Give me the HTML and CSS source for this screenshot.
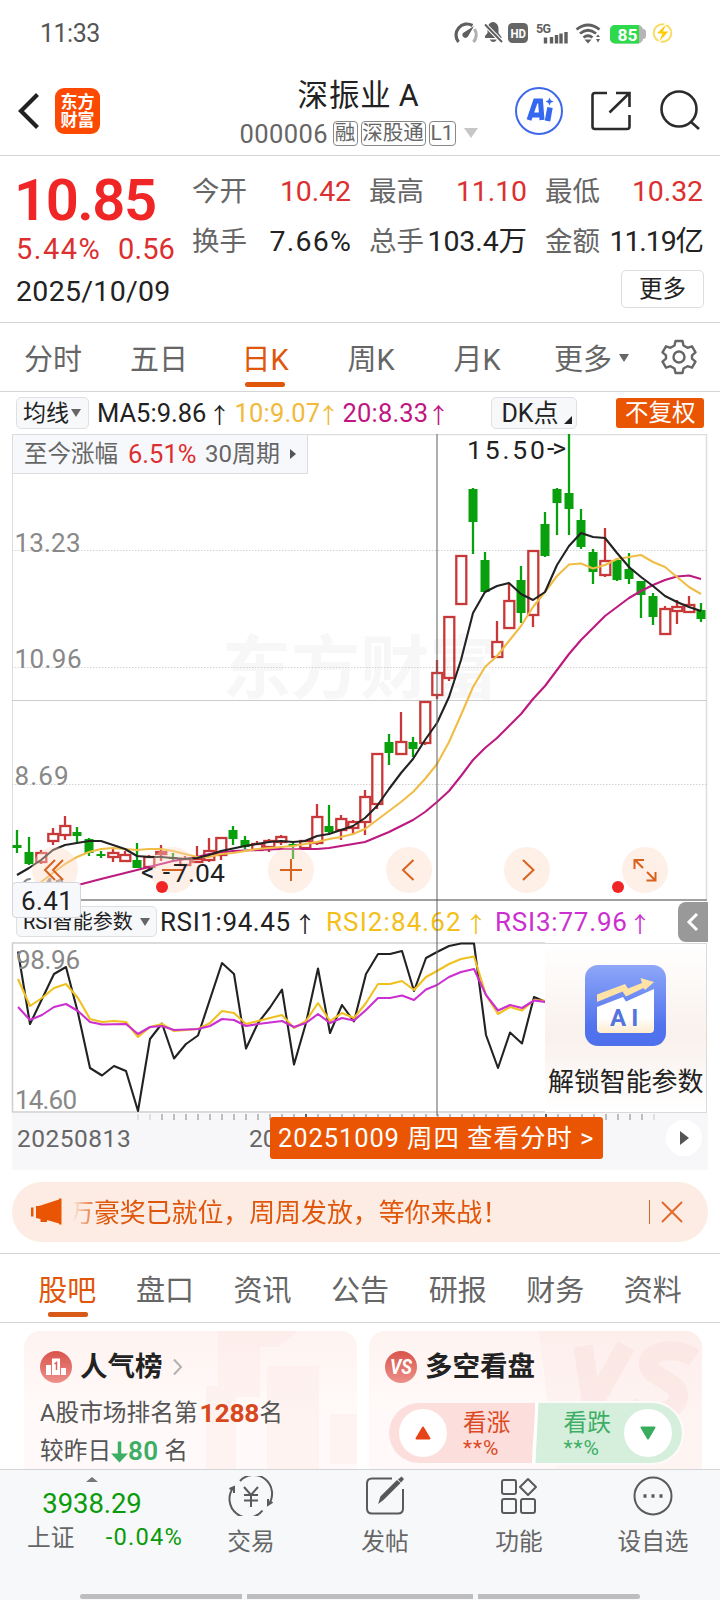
FILE: index.html
```html
<!DOCTYPE html>
<html lang="zh-CN">
<head>
<meta charset="utf-8">
<title>深振业A 000006</title>
<link rel="stylesheet" href="styles.css">
</head>
<body>
<div class="status">
  <span class="clock">11:33</span>
  <svg class="status-icons" width="232" height="30" viewBox="446 18 232 30">
    <g fill="none" stroke="#5f5f5f" stroke-width="3.2">
      <path d="M458.5 42a11 11 0 0 1 14-16.5"/>
      <path d="M474.500 29a11 11 0 0 1-1 13" stroke="#b0b0b0"/>
    </g>
    <path d="M474 26l-6 10.500a3 3 0 0 1-5-3.500z" fill="#5f5f5f"/>
    <path d="M485 38v-2l2.500-3v-5.500q1-5 5.500-5.500c3.500.500 5.500 3 5.500 7v4l3 4v1zM489.500 39.500h7.500q-3.500 5-7.500 0z" fill="#5f5f5f"/>
    <path d="M483.500 23L502 42" stroke="#fff" stroke-width="4"/><path d="M485 24.500L502 42" stroke="#5f5f5f" stroke-width="2"/>
    <rect x="508" y="23" width="20" height="20" rx="4.500" fill="#666"/>
    <text x="510.500" y="37.500" class="ic-b" font-size="12.500" fill="#fff" textLength="15.500" lengthAdjust="spacingAndGlyphs">HD</text>
    <text x="536" y="33" class="ic-b" font-size="12.500" fill="#5f5f5f" textLength="15">5G</text>
    <path d="M545.500 37.500v6M551.500 37v6.500M556.500 35v8.500M561 33.500v10M566 32v11.500" stroke="#5f5f5f" stroke-width="3.400"/>
    <g fill="none" stroke="#5f5f5f" stroke-width="2.800"><path d="M576.500 29.500q11.500-9 23 0M580 33.500q8-6.500 16 0M583.500 37.500q4.500-3.500 9 0"/></g>
    <path d="M584.500 39.500h7l-3.500 4zM596 37l2-2.500 2 2.500zM596 39l2 3.500 2-3.500z" fill="#5f5f5f"/>
    <rect x="638" y="29" width="8" height="10" rx="3" fill="#b5b5b5"/><rect x="610" y="25" width="33" height="18.500" rx="5" fill="#b5b5b5"/><path d="M615 25h24v18.500h-24a5 5 0 0 1-5-5v-8.500a5 5 0 0 1 5-5z" fill="#2fd94c"/>
    <text x="617.500" y="40.500" class="ic-b" font-size="17" fill="#fff" textLength="20" lengthAdjust="spacingAndGlyphs">85</text>
    <circle cx="662.500" cy="33" r="8.800" fill="none" stroke="#f7dc62" stroke-width="2"/><path d="M668 21l-14 13.500h7L657 45l14-14h-7z" fill="#fff"/><path d="M666 24.500l-9 9h5.500l-3 7.500 9-9.500h-5.500z" fill="#fc0"/>
  </svg>
</div>

<header class="header">
  <div class="head-left">
    <svg width="24" height="38" viewBox="0 0 24 38"><path d="M20.500 2.500L4 19l16.500 16.500" fill="none" stroke="#222" stroke-width="4.200"/></svg>
    <div class="logo"><span>东方</span><span>财富</span></div>
  </div>
  <div class="head-mid">
    <div class="name">深振业<span>A</span></div>
    <div class="code"><span class="num">000006</span><i class="b1">融</i><i class="b2">深股通</i><i class="b3">L1</i><b class="caret"></b></div>
  </div>
  <svg class="head-right" width="190" height="52" viewBox="512 85 190 52">
    <circle cx="539" cy="111" r="23" fill="none" stroke="#3d68ea" stroke-width="2"/>
    <path d="M529 120l6.500-19h5l1.500 19M532 115h9" fill="none" stroke="#3568f0" stroke-width="5"/>
    <path d="M550 107.500l-2.500 13.500" stroke="#3568f0" stroke-width="5.500"/><path d="M549.500 97.500l1.200 2.800 2.800 1.200-2.800 1.200-1.200 2.800-1.200-2.800-2.800-1.200 2.800-1.200z" fill="#3568f0"/>
    <g fill="none" stroke="#2b2b2b" stroke-width="2.600"><path d="M607 93h-12q-2.500 0-2.500 2.500v31q0 2.500 2.500 2.500h32q2.500 0 2.500-2.500V115M616 93h13.500v14M629.500 93L609.500 112.500"/><circle cx="679" cy="109" r="17.500"/><path d="M690.500 121.500l8.500 7.500"/></g>
  </svg>
</header>

<section class="quote">
  <div class="quote-top">
    <div class="price"><div class="last">10.85</div><div class="chg"><span class="pct">5.44%</span><span>0.56</span></div></div>
    <div class="stats">
      <div><label>今开</label><em class="up">10.42</em></div><div><label>最高</label><em class="up">11.10</em></div><div><label>最低</label><em class="up">10.32</em></div>
      <div><label>换手</label><em class="wide">7.66%</em></div><div><label>总手</label><em>103.4万</em></div><div><label>金额</label><em class="tight">11.19亿</em></div>
    </div>
  </div>
  <div class="quote-bot"><span>2025/10/09</span><button>更多</button></div>
</section>

<nav class="periods">
  <span style="width:106px">分时</span><span style="width:106px">五日</span><span class="on" style="width:106px">日K</span><span style="width:106px">周K</span><span style="width:106px">月K</span><span class="more" style="width:114px">更多<b class="caret"></b></span>
  <svg width="36" height="36" viewBox="-18 -18 36 36" fill="none" stroke="#666" stroke-width="2.400" stroke-linejoin="round"><path d="M-3.500-16h7l1 4.500 4 2.300 4.500-1.500 3.500 6-3.500 3v3.400l3.500 3-3.500 6-4.500-1.500-4 2.300-1 4.500h-7l-1-4.500-4-2.300-4.500 1.500-3.500-6 3.500-3v-3.400l-3.500-3 3.500-6 4.500 1.500 4-2.300z"/><circle r="5.500"/></svg>
</nav>

<div class="ma">
  <span class="pill avg">均线<b class="caret"></b></span>
  <span class="v5">MA5:9.86</span><u>↑</u>
  <span class="v10 gold">10:9.07</span><u class="gold">↑</u>
  <span class="v20 mag">20:8.33</span><u class="mag">↑</u>
  <span class="pill dk">DK点<b></b></span>
  <span class="adj">不复权</span>
</div>

<main class="charts">
  <div class="kline">
    <svg width="720" height="467" viewBox="0 434 720 467">
      <text x="222" y="693" class="wm" textLength="276">东方财富</text>
      <path d="M12.500 434.500H706.500V900" fill="none" stroke="#dedede" stroke-width="1.500"/><path d="M12.500 434v466" stroke="#dedede"/>
      <path d="M12 550.500h695M12 667.500h695M12 784.500h695" stroke="#d2d2d2" stroke-dasharray="1.500 1.500"/>
      <path d="M12 700.500h695" stroke="#ccc"/>
      <g class="axis"><text x="14.500" y="551.500" textLength="66">13.23</text><text x="14.500" y="667.500" textLength="67">10.96</text><text x="14.500" y="784.500" textLength="54">8.69</text><text x="20" y="897" textLength="48">6.41</text></g>
      <g id="candles"></g>
      <g fill="none" stroke-width="2.100" stroke-linejoin="round">
        <polyline stroke="#bd1a80" points="78,885 101,879 125,873 149,867 173,861 197,857 209,854 233,851 257,850 281,849 317,849 329,848 341,846 353,844 365,842 377,837 389,832 401,826 413,820 425,812 437,802 449,791 461,776 473,760 485,748 497,738 509,726 521,714 533,699 545,686 557,670 569,654 581,640 593,628 605,616 617,607 629,598 641,591 653,585 665,580 677,576.500 689,575.500 701,579"/>
        <polyline stroke="#f0bd47" points="41,882 53,873 65,864 77,857 89,852 101,849 113,848 125,849 137,850 149,849 161,849 173,851 185,854 197,857 209,857 221,854 233,853 245,851 257,849 269,848 281,847 293,846 305,844 317,842 329,839 341,837 353,834 365,829 377,820 389,811 401,802 413,792 425,779 437,764 449,742 461,715 473,687 485,667 497,656 509,641 521,626 533,607 545,592 557,576 569,564.500 581,563.500 593,568.500 605,565 617,559 629,557 641,555 653,562 665,567 677,577 689,587 701,594"/>
        <polyline stroke="#222" points="17,875 29,868 41,860 53,850 65,845 77,843 89,841 101,841 113,845 125,849 137,856 149,857 161,857 173,858 185,859 197,858 209,855 221,851 233,848.500 245,846 257,844 269,842 281,841 293,842 305,841 317,836 329,834 341,830 353,826 365,818 377,806 389,789 401,773 413,759 425,740 437,723 449,697 461,660 473,613 485,592 497,586 509,583 521,594 533,600 545,592 557,565 569,546 581,533 593,537 605,538 617,553 629,567 641,577 653,586 665,596 677,602 689,607 701,611"/>
      </g>
      <path d="M12 900h695" stroke="#a0a0a0" stroke-width="1.800"/>
    </svg>
    <div class="since"><span class="s1">至今涨幅</span><span class="s2 up">6.51%</span><span class="s3">30周期</span><b></b></div>
    <div class="tools">
      <i><svg viewBox="-23 -23 46 46"><path d="M0-10L-10 0 0 10M8-10L-2 0 8 10"/></svg></i>
      <i class="dot"><svg viewBox="-23 -23 46 46"><path d="M-11 0H11"/></svg></i>
      <i><svg viewBox="-23 -23 46 46"><path d="M-11 0H11M0-11V11"/></svg></i>
      <i><svg viewBox="-23 -23 46 46"><path d="M4.500-10L-6 0 4.500 10"/></svg></i>
      <i><svg viewBox="-23 -23 46 46"><path d="M-4-10L6.500 0-4 10"/></svg></i>
      <i class="dot"><svg viewBox="-23 -23 46 46"><path d="M-1-10h-9.500V-1M-10-10L-2-2M1.500 10.500H10.500V2M10 10L2 2"/></svg></i>
    </div>
    <svg class="marks" width="720" height="467" viewBox="0 434 720 467">
      <text x="467" y="458.500" class="mark" textLength="78">15.50</text><text x="547" y="457" class="mark" textLength="19">-&gt;</text>
      <text x="141" y="881" class="mark" textLength="29">&lt;-</text><text x="173" y="882" class="mark" textLength="52">7.04</text>
    </svg>
    <div class="low">6.41</div>
  </div>
  <div class="rsi-row">
    <span class="pill rsi">RSI智能参数<b class="caret"></b></span>
    <span class="r1">RSI1:94.45</span><u>↑</u>
    <span class="r2">RSI2:84.62</span><u class="y2">↑</u>
    <span class="r3">RSI3:77.96</span><u class="m2">↑</u>
    <span class="fold"><svg width="14" height="20" viewBox="0 0 14 20"><path d="M11 2L3 10l8 8" fill="none" stroke="#fff" stroke-width="3"/></svg></span>
  </div>
  <div class="rsi-chart">
    <svg width="534" height="171" viewBox="11 942 534 171">
      <path d="M545 943H12.500V1112H545" fill="none" stroke="#d0d0d0" stroke-width="1.600"/>
      <g fill="none" stroke-width="2.100" stroke-linejoin="round">
        <polyline stroke="#222" points="18,951.500 30,1024 42,999 54,974 66,967 78,1013 90,1068 102,1075.500 114,1066 126,1071 138,1111 150,1039 162,1023.500 174,1058.500 186,1044 198,1035.500 222,963 234,974 246,1048.500 258,1023 270,1007.500 282,989.500 294,1064.500 306,1023 318,968.500 330,1033 342,1005 354,1021.500 366,974 378,954 390,954 402,951 414,991 426,958 437,952 449,946 461,943.500 474,943.500 486,1035 498,1068 510,1032.500 522,1043.500 534,997 546,1002"/>
        <polyline stroke="#f0c020" points="18,979 30,1006 42,998 54,988 66,984 78,998 90,1019 102,1022 114,1021 126,1022 138,1037 150,1027 162,1024 174,1031 198,1029 210,1023 222,1011 234,1013 246,1024 258,1021 270,1018 282,1015 294,1028 306,1021 318,1003 330,1021 342,1013 354,1018 366,1003 378,984 390,984 402,981 414,990 426,977 437,971 449,964 461,959 474,956.500 486,995 498,1014 510,1007 522,1010.500 534,1000 546,1001"/>
        <polyline stroke="#cb2fcf" points="18,1007 30,1020 42,1015 54,1007 66,1004 78,1011 90,1022 102,1024.500 126,1024 138,1034 150,1027 162,1026 174,1030 198,1029 210,1026 222,1019 234,1020 246,1026 258,1024 282,1021 294,1027 306,1023 318,1014 330,1023 342,1018 354,1020.500 366,1010 378,998 390,998 402,995.500 414,1000 426,989.500 437,985 449,977 461,972 474,969 486,995 498,1010.500 510,1005 522,1008 534,1000.500 546,1002"/>
      </g>
      <g class="axis"><text x="16" y="969" textLength="64">98.96</text><text x="15" y="1109" textLength="62">14.60</text></g>
    </svg>
    <div class="ai">
      <svg width="81" height="81" viewBox="0 0 81 81">
        <defs><linearGradient id="g1" x2="0" y2="1"><stop stop-color="#8ea7f8"/><stop offset=".75" stop-color="#5273ee"/><stop offset="1" stop-color="#4f70ec"/></linearGradient><linearGradient id="g2" x2="0" y2="1"><stop stop-color="#fff"/><stop offset=".65" stop-color="#fff"/><stop offset="1" stop-color="#ffebcf"/></linearGradient></defs>
        <rect width="81" height="81" rx="13" fill="url(#g1)"/>
        <path d="M12 42L38 32l3 4.500 28-12.500v40q0 4-4 4H16q-4 0-4-4z" fill="url(#g2)"/>
        <path d="M12 29.500L40 19l3 4.500 14-5.500-1.500-5L69 17l-9 8-1.500-2L41 31.500l-3.500-5L12 37z" fill="#ffe3a5"/>
        <text x="25" y="61" font-size="24" class="ic-b" fill="#5574df" letter-spacing="5">AI</text>
      </svg>
      <span>解锁智能参数</span>
    </div>
  </div>
  <div class="dates">
    <svg width="696" height="8" viewBox="12 1113 696 8"><g id="ticks"></g></svg>
    <div class="date-row"><span class="d1">20250813</span><span class="d2">20</span><span class="cursor">20251009 周四 查看分时 &gt;</span><span class="next"><b></b></span></div>
  </div>
  <div class="cross"></div>
</main>

<div class="notice">
  <svg width="32" height="28" viewBox="0 0 32 28"><path d="M0 9.500h2.500v9H0zM5 8h3L28 1.500V.500h2.500v26H28v-1L16 22v2H9.500v-3L5 20z" fill="#ea5504"/></svg>
  <div class="notice-text">万豪奖已就位，周周发放，等你来战！</div>
  <s></s>
  <svg width="22" height="22" viewBox="0 0 22 22"><path d="M1 1l20 20M21 1L1 21" stroke="#e06a2c" stroke-width="2"/></svg>
</div>

<nav class="sections"><span class="on">股吧</span><span>盘口</span><span>资讯</span><span>公告</span><span>研报</span><span>财务</span><span>资料</span></nav>

<section class="cards">
  <article class="card">
    <svg class="bg" width="333" height="139" viewBox="24 1331 333 139"><g fill="#fbdcd9" opacity=".24"><path d="M218 1331h80l-20 16h-18v50h-24v73h-30v-84h12z"/><path d="M267 1366h52v104h-52zM330 1414h27v50h-27z"/></g></svg>
    <h3><svg width="32" height="32" viewBox="0 0 32 32"><circle cx="16" cy="16" r="16" fill="url(#g3)"/><defs><linearGradient id="g3" x2="0" y2="1"><stop stop-color="#d9544c"/><stop offset="1" stop-color="#ec918a"/></linearGradient></defs><path d="M6 14h5v10H6zM12 7.500h8V24h-8zM21 17h5v7h-5z" fill="#fff"/><path d="M14.500 13l2-1.500v7.500" fill="none" stroke="#dc6259" stroke-width="1.500"/></svg>人气榜<svg class="chev" width="10" height="18" viewBox="0 0 10 18"><path d="M1 1.500L8 9 1 16.500" fill="none" stroke="#b5b0b0" stroke-width="2"/></svg></h3>
    <p>A股市场排名第<strong>1288</strong>名</p>
    <p class="p2">较昨日<svg width="17" height="23" viewBox="0 0 17 23"><path d="M8.500 1.500v14" stroke="#3eae65" stroke-width="3.500"/><path d="M0 13.500h17L8.500 22.500z" fill="#3eae65"/></svg><strong class="down">80</strong>&nbsp;名</p>
  </article>
  <article class="card">
    <svg class="bg" width="333" height="139" viewBox="369 1331 333 139"><path d="M539 1331h163v139H556z" fill="#fbdcd9" opacity=".2"/><g fill="none" stroke="#f8d4d1" stroke-width="19" opacity=".28"><path d="M583 1346l9 60 34-60"/><path d="M694 1358q-14-10-34-6-18 6-8 20l22 14q12 14-6 24-20 8-38-4"/></g></svg>
    <h3><svg width="32" height="32" viewBox="0 0 32 32"><circle cx="16" cy="16" r="16" fill="url(#g3)"/><text x="5" y="23" class="ic-b" font-size="19.500" font-style="italic" fill="#fff" textLength="22" lengthAdjust="spacingAndGlyphs">VS</text></svg>多空看盘</h3>
    <div class="vote">
      <div class="bull"><i><svg width="16" height="14" viewBox="0 0 16 14"><path d="M8 1.500L14.500 12.500H1.500z" fill="#e64319" stroke="#e64319" stroke-width="2" stroke-linejoin="round"/></svg></i><span>看涨<small>**%</small></span></div>
      <div class="bear"><span>看跌<small>**%</small></span><i><svg width="16" height="14" viewBox="0 0 16 14"><path d="M8 12.500L14.500 1.500H1.500z" fill="#37ad5d" stroke="#37ad5d" stroke-width="2" stroke-linejoin="round"/></svg></i></div>
    </div>
  </article>
</section>

<footer class="footer">
  <div class="index"><b></b><strong>3938.29</strong><p><span>上证</span><em>-0.04%</em></p></div>
  <div class="tab"><svg width="46" height="40" viewBox="-23 -20 46 40"><path d="M-11-15A18.500 18.500 0 0 1 17.500 8.500M21.500 6l-4.500 3V3M11.500 14.500A18.500 18.500 0 0 1-17.500-8.500M-21.500-7l4.500-2v6M-7-9L0-1 7-9M0-1V11M-7-1H7M-7 4.500H7"/></svg>交易</div>
  <div class="tab"><svg width="46" height="40" viewBox="-23 -20 46 40"><path d="M7-17.500h-20q-5 0-5 5v25q0 5 5 5h26q5 0 5-5V-7"/><path d="M-5.500 6l1.500-5L12-15l2.500 2L-2 3.500zM14-16.500l2.500-2 1.500 1.500-2 2.500z" fill="#555" stroke-width="1.500"/></svg>发帖</div>
  <div class="tab"><svg width="46" height="40" viewBox="-23 -20 46 40"><rect x="-17" y="-16" width="14" height="14" rx="2"/><rect x="-17" y="3" width="14" height="14" rx="2"/><rect x="2" y="3" width="14" height="14" rx="2"/><path d="M9-17l8 8-8 8-8-8z" stroke-linejoin="round"/></svg>功能</div>
  <div class="tab"><svg width="46" height="40" viewBox="-23 -20 46 40"><circle r="18.500"/><path d="M-9.500 0h3M-1.500 0h3M6.500 0h3" stroke-width="3.500"/></svg>设自选</div>
  <div class="home"><i></i><i></i><i></i></div>
</footer>
<script src="script.js"></script>
</body>
</html>
```
FILE: styles.css
```css
* { box-sizing: border-box; }
body { margin: 0; width: 720px; height: 1600px; overflow: hidden; background: #fff; color: #222; font-family: Roboto, "Noto Sans CJK SC", sans-serif; display: flex; flex-direction: column; }
body > * { flex: none; }
i, em { font-style: normal; }
u { text-decoration: none; }
h3, p { margin: 0; }
svg { display: block; flex: none; }
.ic-b { font-weight: 700; }
.caret { display: inline-block; border: 5px solid transparent; border-top: 8px solid #666; border-bottom: 0; }
.up { color: #dc2f2f; }

.status { height: 68px; padding: 18px 42px 0 40px; display: flex; justify-content: space-between; }
.clock { font-size: 25px; line-height: 31px; color: #555; letter-spacing: -.5px; }

.header { height: 88px; border-bottom: 1px solid #d5d5d5; display: flex; position: relative; }
.head-left { width: 220px; padding: 20px 0 0 17px; display: flex; gap: 14px; }
.head-left > svg { margin-top: 4px; }
.logo { width: 45px; height: 46px; border-radius: 9px; background: #fc4a02; color: #fff; font-size: 17px; font-weight: 700; line-height: 18px; display: flex; flex-direction: column; align-items: center; padding-top: 5px; }
.head-mid { width: 278px; display: flex; flex-direction: column; align-items: center; padding-top: 9px; }
.name { font-size: 30.500px; line-height: 38px; height: 43px; letter-spacing: .9px; margin-left: -1px; }
.name span { margin-left: 7px; }
.code { display: flex; align-items: center; height: 26px; margin-left: -3px; color: #666; }
.code .num { font-size: 25.500px; width: 93px; letter-spacing: .4px; padding-top: 1px; margin-left: 2px; }
.code i { border: 1.5px solid #888; border-radius: 4px; height: 25px; font-size: 20.500px; line-height: 22px; text-align: center; margin-right: 3px; }
.code .b1 { width: 25px; } .code .b2 { width: 65px; } .code .b3 { width: 27px; font-size: 21px; line-height: 23px; }
.code .caret { border-width: 10px 7px 0; border-top-color: #c6c6c6; margin-left: 5px; }
.head-right { margin: 17px 0 0 14px; }

.quote { height: 167px; padding: 10px 16px 0; border-bottom: 1px solid #d5d5d5; }
.quote-top { display: flex; height: 104px; }
.price { width: 176px; color: #f02525; }
.last { font-size: 58px; font-weight: 600; line-height: 69px; height: 67px; letter-spacing: -1.5px; margin-left: -2px; }
.chg { font-size: 29px; line-height: 33px; display: flex; gap: 16px; letter-spacing: .1px; color: #dc2f2f; }
.pct { letter-spacing: 1.500px; width: 86px; }
.stats { width: 511px; display: grid; grid-template-columns: 159px 158px 158px; column-gap: 18px; grid-auto-rows: 50px; }
.stats div { display: flex; justify-content: space-between; line-height: 51px; white-space: nowrap; }
.stats label { font-size: 27.500px; color: #666; }
.stats em { font-size: 28.500px; letter-spacing: -.1px; }
.stats .wide { letter-spacing: 1.200px; margin-right: -1px; } .stats .tight { letter-spacing: -1.100px; }
.quote-bot { display: flex; justify-content: space-between; font-size: 28.500px; line-height: 43px; width: 688px; letter-spacing: .3px; }
.quote-bot button { width: 83px; height: 38px; background: #fff; border: 1px solid #ddd; border-radius: 5px; font: 23.500px/35px Roboto, "Noto Sans CJK SC", sans-serif; padding: 0; color: #222; }

.periods { height: 69px; border-bottom: 1px solid #d5d5d5; display: flex; align-items: center; font-size: 29px; color: #666; line-height: 74px; }
.periods span { height: 68px; text-align: center; position: relative; }
.periods .on { color: #e0560a; }
.periods .on::after { content: ""; position: absolute; left: 33px; width: 40px; top: 59px; height: 5px; border-radius: 3px; background: #e0560a; }
.periods .more { padding-left: 9px; }
.periods .more .caret { vertical-align: 8px; margin-left: 7px; }
.periods svg { margin-left: 17px; }

.ma { height: 42px; padding: 0 16px; display: flex; align-items: center; font-size: 25.500px; line-height: 32px; white-space: nowrap; }
.ma u, .rsi-row u { font: 22px/30px "Noto Sans CJK SC", sans-serif; width: 22px; }
.pill { background: #f7f8fa; border: 1px solid #dfe0e3; border-radius: 5px; height: 32px; line-height: 31px; flex: none; }
.avg { width: 73px; padding-left: 6px; font-size: 23px; margin-right: 8px; }
.avg .caret { vertical-align: 4px; margin-left: 2px; }
.v5 { width: 112px; letter-spacing: 0; } .v10 { width: 83px; margin-left: 4px; letter-spacing: .2px; } .v20 { width: 85px; margin-left: 3px; letter-spacing: .2px; }
.gold { color: #f2b93b; } .mag { color: #c01583; }
.dk { width: 86px; padding-left: 9px; margin-left: 42px; font-size: 25px; position: relative; }
.dk b { position: absolute; right: 4px; bottom: 4px; border-left: 8px solid transparent; border-bottom: 8px solid #222; }
.adj { width: 88px; height: 30px; margin-left: 39px; border-radius: 3px; background: #ea5504; color: #fff; font-size: 23.500px; line-height: 31px; text-align: center; }

.charts { position: relative; height: 736px; }
.kline { position: relative; height: 467px; }
.marks { position: absolute; left: 0; top: 0; pointer-events: none; }
.wm { font-size: 69px; font-weight: 700; fill: #f7f7f7; }
.axis text { font-size: 26px; fill: #888; }
.mark { font-size: 26.500px; fill: #222; }
.since { position: absolute; left: 12px; top: 0; width: 296px; height: 40px; border: 1px solid #dcdcdf; background: #f7f8fb; color: #666; font-size: 24px; line-height: 39px; display: flex; align-items: center; padding-left: 11px; white-space: nowrap; }
.s1 { width: 104px; font-size: 23.500px; } .s2 { width: 77px; font-size: 25.500px; } .s3 { width: 85px; }
.since b { border: 5px solid transparent; border-left: 6px solid #555; border-right: 0; }
.tools { position: absolute; left: 32px; top: 413px; display: flex; gap: 72px; }
.tools i { width: 46px; height: 46px; border-radius: 50%; background: rgba(252, 215, 195, .4); position: relative; }
.tools svg { width: 46px; height: 46px; fill: none; stroke: #d9621f; stroke-width: 2; }
.tools .dot::after { content: ""; position: absolute; width: 12px; height: 12px; border-radius: 50%; left: -17px; top: 34px; background: #f02525; }
.tools .dot:nth-child(2)::after { left: -16px; }
.tools .dot:last-child::after { left: -33px; }
.tools .dot:nth-child(2)::after, .tools .dot:last-child::after { left: auto; }
.tools .dot:nth-child(2)::after { left: 6px; }
.tools .dot:last-child::after { left: -10px; }
.low { position: absolute; left: 12px; top: 448px; width: 69px; height: 36px; border: 1px solid #d4d8dc; border-radius: 4px; background: #f7f8fb; font-size: 26px; line-height: 36px; padding-left: 8px; z-index: 3; letter-spacing: .4px; }
.rsi-row { height: 41px; display: flex; align-items: center; padding-left: 16px; font-size: 26px; line-height: 44px; white-space: nowrap; position: relative; }
.rsi { width: 141px; height: 31px; font-size: 20px; padding-left: 6px; line-height: 31px; margin-right: 3px; }
.rsi .caret { vertical-align: 3px; margin-left: 7px; }
.r1 { width: 134px; letter-spacing: .6px; } .r2 { width: 139px; margin-left: 10px; letter-spacing: 1.100px; } .r3 { width: 134px; margin-left: 8px; letter-spacing: .8px; }
.r2, .y2 { color: #f2c018; } .r3, .m2 { color: #cb2fcf; }
.fold { position: absolute; right: 12px; top: 1px; width: 30px; height: 40px; background: #999; border-radius: 8px 0 0 8px; display: flex; align-items: center; justify-content: center; }
.rsi-chart { height: 171px; display: flex; padding-left: 11px; width: 707px; }
.ai { width: 163px; height: 170px; margin-top: 1px; border: 1px solid #dadada; border-left: 0; background: linear-gradient(180deg, #fff, #f9f1ec 55%, #fff); padding: 21px 0 0 3px; display: flex; flex-direction: column; align-items: flex-start; }
.ai svg { margin-left: 37px; }
.ai span { font-size: 26px; line-height: 32px; margin-top: 20px; white-space: nowrap; letter-spacing: -.1px; }
.dates { height: 57px; margin: 0 12px; background: #f7f7fa; }
.date-row { display: flex; font-size: 24.500px; color: #666; line-height: 35px; }
.d1 { padding-left: 5px; width: 237px; letter-spacing: .5px; } .d2 { width: 21px; overflow: hidden; }
.cursor { width: 333px; height: 42px; margin-top: -4px; position: relative; background: #ea5504; color: #fff; border-radius: 3px; font-size: 25.500px; line-height: 42px; padding-left: 8px; white-space: nowrap; letter-spacing: .9px; }
.next { width: 36px; height: 36px; margin-top: -1px; border-radius: 50%; background: #fff; margin-left: 63px; display: flex; align-items: center; justify-content: center; }
.next b { border: 7.500px solid transparent; border-left: 9px solid #555; border-right: 0; }
.cross { position: absolute; left: 436px; top: 0; width: 2px; height: 682px; background: rgba(100, 100, 100, .52); }

.notice { height: 60px; margin: 12px 12px 11px; border-radius: 30px; background: #fcece3; display: flex; align-items: center; padding: 0 25px 0 19px; }
.notice-text { width: 556px; margin-left: 10px; height: 40px; line-height: 42px; font-size: 25.900px; color: #e0560a; white-space: nowrap; -webkit-mask: linear-gradient(90deg, transparent, #000 26px); mask: linear-gradient(90deg, transparent, #000 26px); text-indent: -5px; }
.notice s { width: 1.500px; height: 24px; background: #ca6735; margin-right: 11px; margin-left: auto; }

.sections { height: 70px; border-top: 1px solid #d5d5d5; border-bottom: 1px solid #d5d5d5; display: flex; padding-left: 18.500px; font-size: 29px; line-height: 75px; color: #666; }
.sections span { width: 97.600px; text-align: center; position: relative; height: 68px; }
.sections .on { color: #e0560a; }
.sections .on::after { content: ""; position: absolute; left: 29px; width: 40px; top: 58px; height: 5px; border-radius: 2px; background: #d85a18; }

.cards { height: 146px; padding: 8px 18px 0 24px; display: flex; gap: 12px; overflow: hidden; }
.card { width: 333px; height: 138px; border-radius: 16px 16px 0 0; background: linear-gradient(180deg, #fef3f1, #fffaf9 60%); position: relative; padding: 19px 16px 0; overflow: hidden; }
.card > :not(.bg) { position: relative; }
.card .bg { position: absolute; left: 0; top: 0; }
.card h3 { display: flex; align-items: center; height: 32px; font-size: 27.500px; font-weight: 700; gap: 8px; line-height: 36px; padding-top: 1px; }
.card .chev { margin-left: 2px; }
.card p { font-size: 23.700px; line-height: 32px; color: #555; margin-top: 16px; height: 30px; display: flex; align-items: center; white-space: nowrap; }
.card .p2 { margin-top: 8px; }
.card strong { color: #d8481c; font-size: 26.500px; font-weight: 700; margin-left: 2px; letter-spacing: -.3px; }
.card .down { color: #3eae65; font-size: 26px; font-weight: 600; margin-left: 0; letter-spacing: .3px; }
.vote { width: 297px; height: 64px; margin: 19px 0 0 2px; border: 2px solid #fffafa; border-radius: 32px; overflow: hidden; display: flex; background: #fff; }
.vote > div { display: flex; align-items: center; height: 60px; width: 147px; }
.vote i { width: 48px; height: 48px; border-radius: 50%; background: #fff; display: flex; align-items: center; justify-content: center; }
.vote span { font-size: 23.700px; line-height: 29px; display: block; width: 50px; }
.vote small { display: block; font-size: 21px; line-height: 20px; letter-spacing: 1px; }
.bull { background: #fcdfdc; color: #dc4a24; padding-left: 10px; gap: 16px; clip-path: polygon(0 0, 100% 0, 97.500% 100%, 0 100%); }
.bear { background: #d6efdd; color: #3eae65; padding-left: 28px; gap: 11px; clip-path: polygon(2% 0, 100% 0, 100% 100%, 0 100%); }

.footer { height: 132px; border-top: 1px solid #d2d4d6; background: #f7f8fa; display: flex; position: relative; }
.index { width: 184px; padding-top: 7px; display: flex; flex-direction: column; align-items: center; color: #0a9b0a; }
.index b { border: 6px solid transparent; border-bottom: 5px solid #777; border-top: 0; }
.index strong { font-size: 27.500px; font-weight: 400; line-height: 44px; height: 44px; letter-spacing: -.1px; }
.index p { display: flex; width: 156px; justify-content: space-between; font-size: 23.700px; line-height: 23px; margin-left: 26px; }
.index span { color: #666; line-height: 25px; }
.index em { letter-spacing: 1.200px; }
.tab { width: 134px; display: flex; flex-direction: column; align-items: center; padding-top: 6px; font-size: 23.700px; line-height: 52px; color: #666; }
.tab svg { fill: none; stroke: #5a5a5a; stroke-width: 2; }
.home { position: absolute; left: 80px; bottom: 2px; display: flex; gap: 5px; }
.home i { height: 5px; background: #bdbdbf; width: 162px; border-radius: 3px 0 0 3px; }
.home i:nth-child(2) { width: 226px; border-radius: 0; }
.home i:last-child { border-radius: 0 3px 3px 0; }
```
FILE: script.js
```js
// Each candle: [up?, wick top, wick bottom, body top, body bottom]
const data = [
  [0,830,853,845,848],[0,837,865,852,864],[1,850,864,853,862],[1,828,845,834,841],[1,816,840,826,835],
  [0,827,843,832,836],[0,838,856,839,853],[0,851,858,854,856],[1,848,862,853,857],[1,851,862,855,861],
  [0,843,868,860,868],[1,855,869,857,867],[1,845,861,852,854],[0,853,861,857,859],[1,856,867,859,865],
  [1,846,863,859,862],[1,838,862,851,860],[1,837,860,838,855],[0,826,845,830,839],[0,836,849,840,847],
  [1,841,851,844,850],[1,839,852,841,847],[1,835,845,837,842],[0,842,859,844,846],[1,840,848,841,848],
  [1,804,845,817,843],[0,805,834,826,832],[1,815,840,819,830],[1,820,835,822,828],[1,790,835,797,822],
  [1,754,809,754,804],[0,734,765,742,753],[1,712,754,742,754],[0,737,757,742,749],[1,702,745,702,743],
  [1,660,699,673,695],[1,617,681,617,678],[1,555,604,556,604],[0,488,554,489,522],[0,552,593,560,592],
  [1,621,657,642,657],[1,583,628,601,628],[0,566,623,580,613],[1,551,627,551,615],[0,512,557,524,556],
  [0,488,535,489,503],[0,434,535,493,509],[0,509,549,520,547],[0,549,584,552,572],[1,528,577,561,575],
  [0,558,581,560,580],[0,553,584,569,579],[0,581,618,581,595],[0,593,625,596,617],[1,606,635,609,634],
  [1,600,624,607,611],[1,596,613,605,612],[0,603,622,610,619]
];
document.getElementById('candles').innerHTML = data.map(([up, hi, lo, top, bottom], i) => {
  const x = 17 + i * 12;
  if (!up) return `<path d="M${x} ${hi}V${lo}" stroke="#08a00c" stroke-width="2.3"/><rect x="${x - 4.5}" y="${top}" width="9" height="${bottom - top}" fill="#08a00c"/>`;
  return `<path d="M${x} ${hi}V${top}M${x} ${bottom}V${lo}" stroke="#c83838" stroke-width="2.3"/><rect x="${x - 4.7}" y="${top}" width="10" height="${bottom - top}" fill="none" stroke="#c83838" stroke-width="2.3"/>`;
}).join('');

let ticks = '';
for (let i = 0; i <= 43; i++) {
  const dark = i === 14 || i === 34;
  const fade = i < 2 || i > 42 ? .4 : 1;
  ticks += `<path d="M${138 + i * 12} 1114v6" stroke="${dark ? '#333' : '#aaa'}" stroke-width="1.500" opacity="${fade}"/>`;
}
document.getElementById('ticks').innerHTML = ticks;
```
